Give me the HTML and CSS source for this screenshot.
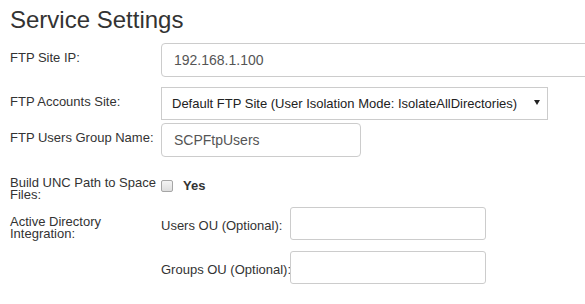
FILE: index.html
```html
<!DOCTYPE html>
<html lang="en">
<head>
    <meta charset="UTF-8">
    <title>Service Settings</title>
    <link rel="stylesheet" href="styles.css">
</head>
<body>
    <h2 class="page-title">Service Settings</h2>
    <div class="settings">
        <div class="row row-ip">
            <label class="label" for="ftpIp">FTP Site IP:</label>
            <input type="text" id="ftpIp" class="field field-ip" value="192.168.1.100">
        </div>
        <div class="row row-site">
            <label class="label" for="ftpSite">FTP Accounts Site:</label>
            <div class="select-wrap">
                <select id="ftpSite" class="site-select">
                    <option>Default FTP Site (User Isolation Mode: IsolateAllDirectories)</option>
                </select>
            </div>
        </div>
        <div class="row row-group">
            <label class="label" for="ftpGroup">FTP Users Group Name:</label>
            <input type="text" id="ftpGroup" class="field field-group" value="SCPFtpUsers">
        </div>
        <div class="row row-unc">
            <label class="label" for="buildUnc">Build UNC Path to Space Files:</label>
            <div class="check-cell">
                <input type="checkbox" id="buildUnc" class="check">
                <span class="check-text">Yes</span>
            </div>
        </div>
        <div class="row row-ad">
            <label class="label">Active Directory Integration:</label>
            <div class="sub-rows">
                <div class="sub-row">
                    <label class="sub-label" for="usersOu">Users OU (Optional):</label>
                    <input type="text" id="usersOu" class="field field-sub">
                </div>
                <div class="sub-row">
                    <label class="sub-label" for="groupsOu">Groups OU (Optional):</label>
                    <input type="text" id="groupsOu" class="field field-sub">
                </div>
            </div>
        </div>
    </div>
</body>
</html>
```

FILE: styles.css
```css
html {
    overflow: hidden;
}
body {
    margin: 0;
    padding: 0 10px;
    font-family: "Liberation Sans", Arial, sans-serif;
    font-size: 13px;
    color: #333333;
    background-color: #ffffff;
}
.page-title {
    margin: 0;
    padding-top: 6px;
    font-size: 24px;
    font-weight: normal;
    line-height: 28px;
}
.settings {
    margin-top: 9px;
}
.row {
    display: flex;
    align-items: flex-start;
}
.label {
    width: 151px;
    flex-shrink: 0;
    padding-top: 9px;
    line-height: 12px;
}
.field {
    box-sizing: border-box;
    height: 34px;
    padding: 0 12px;
    border: 1px solid #cccccc;
    border-radius: 4px;
    font-family: "Liberation Sans", Arial, sans-serif;
    font-size: 14px;
    color: #555555;
    background-color: #ffffff;
    outline: none;
}
.field-ip {
    width: 440px;
    flex-shrink: 0;
}
.row-site {
    margin-top: 10px;
}
.select-wrap {
    position: relative;
    width: 387px;
}
.select-wrap::after {
    content: "";
    position: absolute;
    right: 8px;
    top: 13px;
    border-left: 3px solid transparent;
    border-right: 3px solid transparent;
    border-top: 5px solid #222222;
}
.site-select {
    appearance: none;
    box-sizing: border-box;
    width: 100%;
    height: 33px;
    padding: 0 10px;
    border: 1px solid #cccccc;
    border-radius: 0;
    background-color: #ffffff;
    font-family: "Liberation Sans", Arial, sans-serif;
    font-size: 13px;
    color: #222222;
    outline: none;
}
.row-group {
    margin-top: 3px;
}
.field-group {
    width: 200px;
}
.row-unc {
    margin-top: 11px;
}
.check-cell {
    display: flex;
    align-items: center;
    padding-top: 12px;
}
.check {
    appearance: none;
    box-sizing: border-box;
    width: 12px;
    height: 12px;
    margin: 0;
    border: 1px solid #a6a6a6;
    border-radius: 2px;
    background: linear-gradient(#f4f4f4, #dedede);
}
.check-text {
    margin-left: 10px;
    font-weight: bold;
    line-height: 12px;
}
.row-ad {
    margin-top: 6px;
}
.sub-row {
    display: flex;
    align-items: flex-start;
}
.sub-row + .sub-row {
    margin-top: 11px;
}
.sub-label {
    width: 129px;
    flex-shrink: 0;
    padding-top: 13px;
    line-height: 12px;
    white-space: nowrap;
}
.field-sub {
    width: 196px;
    height: 33px;
    border-radius: 3px;
}
```
